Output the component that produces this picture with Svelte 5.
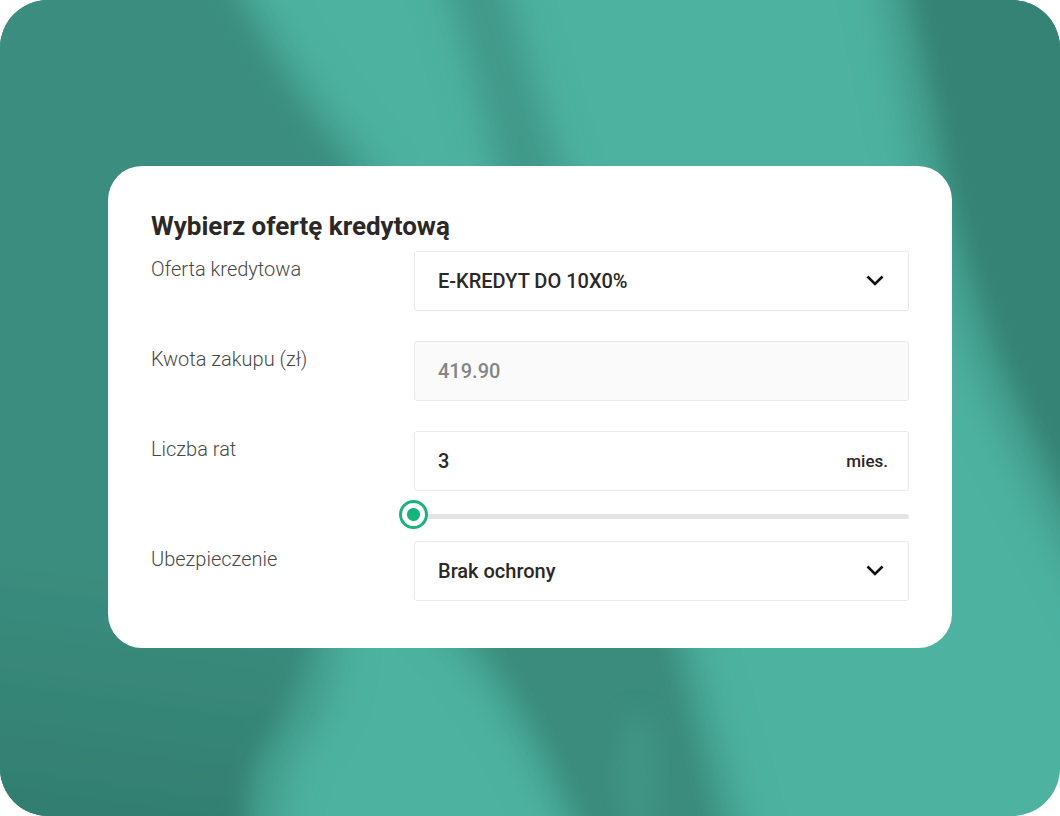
<script>
  let offer = $state('E-KREDYT DO 10X0%');
  let amount = $state('419.90');
  let installments = $state(3);
  let insurance = $state('Brak ochrony');

  const offers = ['E-KREDYT DO 10X0%'];
  const insurances = ['Brak ochrony'];
</script>

{#snippet chevron()}
  <svg class="chevron" viewBox="0 0 18 12" aria-hidden="true">
    <path d="M1.5 1.5 9 9 16.5 1.5" fill="none" stroke="#111" stroke-width="2.6" />
  </svg>
{/snippet}

<div class="scene">
  <svg class="backdrop" viewBox="0 0 1060 816" preserveAspectRatio="none" aria-hidden="true">
    <defs>
      <linearGradient id="left-shade" gradientUnits="userSpaceOnUse" x1="160" y1="0" x2="40" y2="850">
        <stop offset="0" stop-color="#3b8e7f" />
        <stop offset="0.65" stop-color="#3b8e7f" />
        <stop offset="1" stop-color="#317c6e" />
      </linearGradient>
      <filter id="soft" x="-20%" y="-20%" width="140%" height="140%">
        <feGaussianBlur stdDeviation="11" />
      </filter>
      <filter id="softer" x="-50%" y="-20%" width="200%" height="140%">
        <feGaussianBlur stdDeviation="18" />
      </filter>
    </defs>
    <rect width="1060" height="816" fill="#4db2a0" />

    <!-- wide half-shadows on the lit side of each fold -->
    <path d="M-80 -80 L215 -80 Q290 70 375 166 L460 400 L340 600 Q345 700 300 750 Q275 790 280 900 L-80 900Z" fill="#429c8b" filter="url(#softer)" />
    <path d="M380 560 L670 560 Q710 700 765 900 L590 900 Q535 740 450 640Z" fill="#429c8b" filter="url(#softer)" />
    <path d="M865 -80 L1160 -80 L1160 740 Q1040 520 972 370 Q925 240 905 120Z" fill="#429c8b" filter="url(#softer)" />

    <path d="M430 -60 L495 -60 Q530 80 580 220 L505 220 Q480 80 430 -60Z" fill="#3f9888" filter="url(#softer)" />
    <path
      d="M-80 -80 L195 -80 Q265 70 345 166 L460 400 L320 600 Q305 690 262 750 Q238 790 246 900 L-80 900Z"
      fill="url(#left-shade)"
      filter="url(#soft)"
    />
    <path d="M380 560 L650 560 Q685 700 735 900 L610 900 Q555 740 480 640Z" fill="#3a8c7d" filter="url(#soft)" />
    <ellipse cx="638" cy="775" rx="22" ry="60" fill="#3f9484" filter="url(#soft)" />
    <path d="M895 -80 L1160 -80 L1160 690 Q1060 490 1005 370 Q955 240 938 120Z" fill="#358375" filter="url(#soft)" />
  </svg>

  <form class="card" onsubmit={(e) => e.preventDefault()}>
    <h1>Wybierz ofertę kredytową</h1>

    <div class="row">
      <label for="offer">Oferta kredytowa</label>
      <div class="field">
        <select id="offer" bind:value={offer}>
          {#each offers as item}
            <option>{item}</option>
          {/each}
        </select>
        {@render chevron()}
      </div>
    </div>

    <div class="row">
      <label for="amount">Kwota zakupu (zł)</label>
      <div class="field disabled">
        <input id="amount" type="text" value={amount} disabled />
      </div>
    </div>

    <div class="row with-slider">
      <label for="installments">Liczba rat</label>
      <div>
        <div class="field">
          <input id="installments" type="text" inputmode="numeric" bind:value={installments} />
          <span class="unit">mies.</span>
        </div>
        <input
          class="slider"
          type="range"
          min="3"
          max="10"
          aria-label="Liczba rat"
          bind:value={installments}
        />
      </div>
    </div>

    <div class="row">
      <label for="insurance">Ubezpieczenie</label>
      <div class="field">
        <select id="insurance" bind:value={insurance}>
          {#each insurances as item}
            <option>{item}</option>
          {/each}
        </select>
        {@render chevron()}
      </div>
    </div>
  </form>
</div>

<style>
  :global(body) {
    margin: 0;
    background: #fff;
  }

  .scene {
    position: relative;
    box-sizing: border-box;
    display: flex;
    align-items: center;
    min-height: 100vh;
    padding: 40px 108px 42px;
    border-radius: 48px;
    overflow: hidden;
    font-family: Roboto, "Noto Sans", sans-serif;
    color: #2b2826;
  }

  .backdrop {
    position: absolute;
    inset: 0;
    width: 100%;
    height: 100%;
  }

  .card {
    position: relative;
    box-sizing: border-box;
    width: 100%;
    padding: 42px 43px 47px;
    background: #fff;
    border-radius: 34px;
  }

  h1 {
    margin: 0 0 7px;
    font-size: 26px;
    font-weight: 700;
    line-height: 36px;
  }

  .row {
    display: grid;
    grid-template-columns: 263px 1fr;
    margin-bottom: 30px;
  }

  .row.with-slider,
  .row:last-child {
    margin-bottom: 0;
  }

  label {
    padding-top: 4px;
    font-size: 20px;
    font-weight: 300;
    line-height: 28px;
    color: #4a4846;
  }

  .field {
    position: relative;
    box-sizing: border-box;
    display: flex;
    align-items: center;
    height: 60px;
    border: 1px solid #e9e9e9;
    border-radius: 3px;
    background: #fff;
  }

  .field.disabled {
    background: #fafafa;
  }

  .field input,
  .field select {
    flex: 1;
    min-width: 0;
    height: 100%;
    margin: 0;
    padding: 0 23px;
    border: none;
    outline: none;
    background: none;
    appearance: none;
    font: inherit;
    font-size: 20px;
    font-weight: 500;
    color: inherit;
  }

  .field input:disabled {
    color: #858585;
  }

  .unit {
    padding-right: 20px;
    font-size: 17px;
    font-weight: 500;
  }

  .chevron {
    position: absolute;
    right: 24px;
    width: 18px;
    height: 12px;
    pointer-events: none;
  }

  .slider {
    display: block;
    width: calc(100% + 15px);
    height: 50px;
    margin: 0 0 0 -15px;
    appearance: none;
    background: none;
  }

  .slider::-webkit-slider-runnable-track {
    height: 5px;
    border-radius: 3px;
    background: linear-gradient(to right, transparent 15px, #e4e4e4 15px);
  }

  .slider::-webkit-slider-thumb {
    box-sizing: border-box;
    width: 29px;
    height: 29px;
    margin-top: -14px;
    appearance: none;
    border: 3px solid #1bb27b;
    border-radius: 50%;
    background: radial-gradient(circle, #14b57b 6px, #fff 7px);
  }
</style>
